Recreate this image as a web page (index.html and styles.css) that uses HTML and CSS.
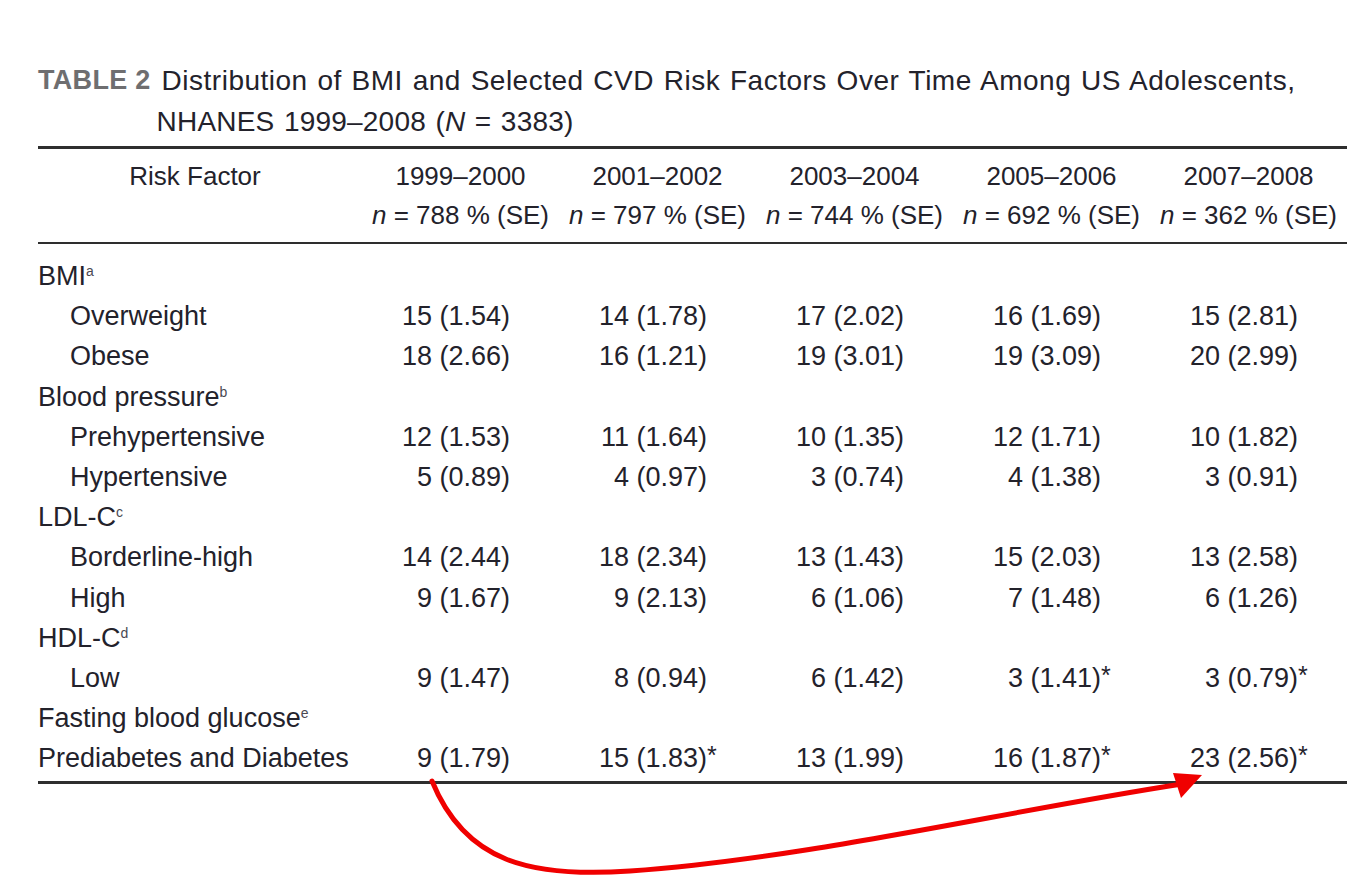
FILE: index.html
```html
<!DOCTYPE html>
<html lang="en">
<head>
<meta charset="utf-8">
<title>Table 2</title>
<link rel="stylesheet" href="styles.css">
</head>
<body>
<div class="page">
  <div class="caption">
    <span class="cap-label">TABLE 2</span>
    <span class="cap-title">Distribution of BMI and Selected CVD Risk Factors Over Time Among US Adolescents,<br><span class="cap-line2">NHANES 1999–2008 (<i>N</i> = 3383)</span></span>
  </div>

  <div class="rule rule-top"></div>
  <div class="grid head">
    <div class="hcell hfirst">Risk Factor</div>
    <div class="hcell">1999–2000</div>
    <div class="hcell">2001–2002</div>
    <div class="hcell">2003–2004</div>
    <div class="hcell">2005–2006</div>
    <div class="hcell">2007–2008</div>
    <div class="hcell"></div>
    <div class="hcell"><i>n</i> = 788 % (SE)</div>
    <div class="hcell"><i>n</i> = 797 % (SE)</div>
    <div class="hcell"><i>n</i> = 744 % (SE)</div>
    <div class="hcell"><i>n</i> = 692 % (SE)</div>
    <div class="hcell"><i>n</i> = 362 % (SE)</div>
  </div>
  <div class="rule rule-mid"></div>

  <div class="grid body">
    <div class="lab">BMI<sup>a</sup></div><div></div><div></div><div></div><div></div><div></div>
    <div class="lab sub">Overweight</div><div class="val">15 (1.54)</div><div class="val">14 (1.78)</div><div class="val">17 (2.02)</div><div class="val">16 (1.69)</div><div class="val">15 (2.81)</div>
    <div class="lab sub">Obese</div><div class="val">18 (2.66)</div><div class="val">16 (1.21)</div><div class="val">19 (3.01)</div><div class="val">19 (3.09)</div><div class="val">20 (2.99)</div>
    <div class="lab">Blood pressure<sup>b</sup></div><div></div><div></div><div></div><div></div><div></div>
    <div class="lab sub">Prehypertensive</div><div class="val">12 (1.53)</div><div class="val">11 (1.64)</div><div class="val">10 (1.35)</div><div class="val">12 (1.71)</div><div class="val">10 (1.82)</div>
    <div class="lab sub">Hypertensive</div><div class="val">5 (0.89)</div><div class="val">4 (0.97)</div><div class="val">3 (0.74)</div><div class="val">4 (1.38)</div><div class="val">3 (0.91)</div>
    <div class="lab">LDL-C<sup>c</sup></div><div></div><div></div><div></div><div></div><div></div>
    <div class="lab sub">Borderline-high</div><div class="val">14 (2.44)</div><div class="val">18 (2.34)</div><div class="val">13 (1.43)</div><div class="val">15 (2.03)</div><div class="val">13 (2.58)</div>
    <div class="lab sub">High</div><div class="val">9 (1.67)</div><div class="val">9 (2.13)</div><div class="val">6 (1.06)</div><div class="val">7 (1.48)</div><div class="val">6 (1.26)</div>
    <div class="lab">HDL-C<sup>d</sup></div><div></div><div></div><div></div><div></div><div></div>
    <div class="lab sub">Low</div><div class="val">9 (1.47)</div><div class="val">8 (0.94)</div><div class="val">6 (1.42)</div><div class="val">3 (1.41)<span class="star">*</span></div><div class="val">3 (0.79)<span class="star">*</span></div>
    <div class="lab">Fasting blood glucose<sup>e</sup></div><div></div><div></div><div></div><div></div><div></div>
    <div class="lab">Prediabetes and Diabetes</div><div class="val">9 (1.79)</div><div class="val">15 (1.83)<span class="star">*</span></div><div class="val">13 (1.99)</div><div class="val">16 (1.87)<span class="star">*</span></div><div class="val">23 (2.56)<span class="star">*</span></div>
  </div>
  <div class="rule rule-bottom"></div>

  <svg class="arrow" width="1362" height="877" viewBox="0 0 1362 877" aria-hidden="true">
    <path d="M432,781 C465,862 530,878 630,871 C810,858 1000,812 1182,784" fill="none" stroke="#f00000" stroke-width="5" stroke-linecap="round"/>
    <polygon points="1202,775 1173,773 1181,798" fill="#f00000"/>
  </svg>
</div>
</body>
</html>
```

FILE: styles.css
```css
html, body {
  margin: 0;
  padding: 0;
  background: #ffffff;
}

.page {
  position: relative;
  width: 1362px;
  height: 877px;
  box-sizing: border-box;
  padding: 60px 15px 0 38px;
  font-family: "Liberation Sans", Arial, sans-serif;
  color: #23222b;
  overflow: hidden;
}

.caption {
  display: flex;
  gap: 11px;
  font-size: 28px;
  line-height: 41px;
  height: 82px;
}

.cap-label {
  font-weight: bold;
  color: #6e6e70;
  font-size: 27px;
  letter-spacing: 0.3px;
  white-space: nowrap;
}

.cap-title {
  white-space: nowrap;
  letter-spacing: 0.5px;
  word-spacing: 1.5px;
}

.cap-line2 {
  margin-left: -5px;
  letter-spacing: 0.2px;
}

.rule {
  width: 1309px;
  background: #2e2e2e;
}

.rule-top {
  height: 3px;
  margin-top: 4px;
  margin-bottom: 8px;
}

.rule-mid {
  height: 2px;
  margin-top: 7px;
  margin-bottom: 12px;
}

.rule-bottom {
  height: 3px;
  margin-top: 3px;
}

.grid {
  display: grid;
  grid-template-columns: 324px repeat(5, 197px);
  width: 1309px;
}

.head {
  grid-auto-rows: 39px;
  font-size: 26px;
  line-height: 39px;
}

.hcell {
  text-align: center;
  white-space: nowrap;
}

.hfirst {
  padding-right: 10px;
}

.body {
  grid-auto-rows: 40.2px;
  font-size: 27px;
  line-height: 40.2px;
}

.lab {
  white-space: nowrap;
}

.sub {
  padding-left: 32px;
}

.val {
  text-align: right;
  padding-right: 49px;
  white-space: nowrap;
}

.star {
  margin-right: -14px;
  display: inline-block;
  width: 14px;
  text-align: left;
  font-size: 25px;
  line-height: 0;
  vertical-align: 3px;
}

sup {
  font-size: 14px;
  line-height: 0;
  vertical-align: 9px;
  color: #4a4952;
}

.arrow {
  position: absolute;
  left: 0;
  top: 0;
  pointer-events: none;
}
```
